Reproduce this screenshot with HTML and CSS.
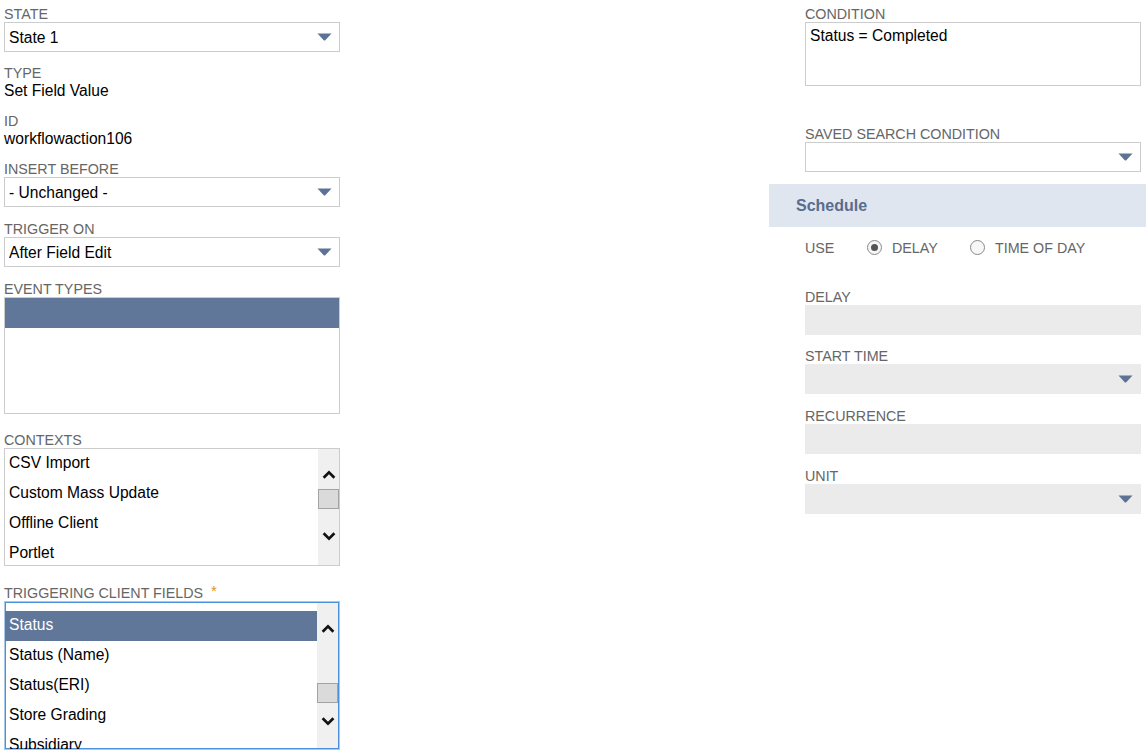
FILE: index.html
```
<!DOCTYPE html>
<html>
<head>
<meta charset="utf-8">
<link rel="stylesheet" href="styles.css">
</head>
<body>
<div class="page">
  <div class="col-left">
    <div class="field">
      <div class="label">STATE</div>
      <div class="select"><span>State 1</span><svg class="caret" viewBox="0 0 15 8"><path d="M0.5 0.5 H14.5 L8.3 7.2 Q7.5 8 6.7 7.2 Z"/></svg></div>
    </div>
    <div class="field">
      <div class="label">TYPE</div>
      <div class="value">Set Field Value</div>
    </div>
    <div class="field">
      <div class="label">ID</div>
      <div class="value">workflowaction106</div>
    </div>
    <div class="field">
      <div class="label">INSERT BEFORE</div>
      <div class="select"><span>- Unchanged -</span><svg class="caret" viewBox="0 0 15 8"><path d="M0.5 0.5 H14.5 L8.3 7.2 Q7.5 8 6.7 7.2 Z"/></svg></div>
    </div>
    <div class="field f-trigger">
      <div class="label">TRIGGER ON</div>
      <div class="select"><span>After Field Edit</span><svg class="caret" viewBox="0 0 15 8"><path d="M0.5 0.5 H14.5 L8.3 7.2 Q7.5 8 6.7 7.2 Z"/></svg></div>
    </div>
    <div class="field f-events">
      <div class="label">EVENT TYPES</div>
      <div class="listbox events">
        <div class="rows">
          <div class="row selected"></div>
        </div>
      </div>
    </div>
    <div class="field f-contexts">
      <div class="label">CONTEXTS</div>
      <div class="listbox contexts">
        <div class="rows">
          <div class="row">CSV Import</div>
          <div class="row">Custom Mass Update</div>
          <div class="row">Offline Client</div>
          <div class="row">Portlet</div>
        </div>
        <div class="scrollbar sb-contexts">
          <svg class="chev up" viewBox="0 0 13 8"><path d="M1.5 7 L6.5 2 L11.5 7"/></svg>
          <div class="thumb"></div>
          <svg class="chev down" viewBox="0 0 13 8"><path d="M1.5 1 L6.5 6 L11.5 1"/></svg>
        </div>
      </div>
    </div>
    <div class="field f-clients">
      <div class="label">TRIGGERING CLIENT FIELDS <span class="req">*</span></div>
      <div class="listbox clients">
        <div class="rows">
          <div class="row selected">Status</div>
          <div class="row">Status (Name)</div>
          <div class="row">Status(ERI)</div>
          <div class="row">Store Grading</div>
          <div class="row">Subsidiary</div>
        </div>
        <div class="scrollbar sb-clients">
          <svg class="chev up" viewBox="0 0 13 8"><path d="M1.5 7 L6.5 2 L11.5 7"/></svg>
          <div class="thumb"></div>
          <svg class="chev down" viewBox="0 0 13 8"><path d="M1.5 1 L6.5 6 L11.5 1"/></svg>
        </div>
      </div>
    </div>
  </div>

  <div class="col-right">
    <div class="rfield">
      <div class="label">CONDITION</div>
      <div class="textarea">Status = Completed</div>
    </div>
    <div class="rfield f-saved">
      <div class="label">SAVED SEARCH CONDITION</div>
      <div class="select"><span></span><svg class="caret" viewBox="0 0 15 8"><path d="M0.5 0.5 H14.5 L8.3 7.2 Q7.5 8 6.7 7.2 Z"/></svg></div>
    </div>
    <div class="section-head">Schedule</div>
    <div class="use-row">
      <span class="label use-label">USE</span>
      <span class="opt opt1"><span class="radio checked"></span><span class="label">DELAY</span></span>
      <span class="opt"><span class="radio"></span><span class="label">TIME OF DAY</span></span>
    </div>
    <div class="rfield sfield f-delay">
      <div class="label">DELAY</div>
      <div class="input"></div>
    </div>
    <div class="rfield sfield">
      <div class="label">START TIME</div>
      <div class="input select-dis"><svg class="caret" viewBox="0 0 15 8"><path d="M0.5 0.5 H14.5 L8.3 7.2 Q7.5 8 6.7 7.2 Z"/></svg></div>
    </div>
    <div class="rfield sfield s14">
      <div class="label">RECURRENCE</div>
      <div class="input"></div>
    </div>
    <div class="rfield sfield s14">
      <div class="label">UNIT</div>
      <div class="input select-dis"><svg class="caret" viewBox="0 0 15 8"><path d="M0.5 0.5 H14.5 L8.3 7.2 Q7.5 8 6.7 7.2 Z"/></svg></div>
    </div>
  </div>
</div>
</body>
</html>
```

FILE: styles.css
```
html, body {
  margin: 0;
  padding: 0;
  background: #fff;
}
body {
  font-family: "Liberation Sans", Arial, sans-serif;
  color: #000;
  width: 1146px;
  height: 754px;
  overflow: hidden;
}
.page {
  display: grid;
  grid-template-columns: 336px 377px;
  column-gap: 429px;
  padding-left: 4px;
  padding-top: 6px;
}
.label {
  font-size: 14.3px;
  line-height: 16px;
  color: #666;
  white-space: nowrap;
}
.value {
  font-size: 15.6px;
  line-height: 19px;
}
.field + .field {
  margin-top: 13px;
}
.field.f-trigger { margin-top: 14px; }
.field.f-events { margin-top: 14px; }
.field.f-contexts { margin-top: 18px; }
.field.f-clients { margin-top: 19px; }

.select {
  height: 30px;
  box-sizing: border-box;
  border: 1px solid #ccc;
  display: flex;
  align-items: center;
  justify-content: space-between;
  padding: 0 7px 0 4px;
  font-size: 15.6px;
  line-height: 19px;
}
.caret {
  width: 15px;
  height: 8px;
  fill: #5d7395;
  flex: none;
}

.listbox {
  box-sizing: border-box;
  border: 1px solid #ccc;
  display: flex;
  overflow: hidden;
}
.rows {
  flex: 1;
  min-width: 0;
}
.row {
  height: 30px;
  line-height: 28px;
  font-size: 15.6px;
  padding-left: 4px;
  white-space: nowrap;
}
.row.selected {
  background: #617799;
  color: #fff;
}
.events { height: 117px; }
.contexts { height: 118px; }
.clients {
  height: 149px;
  border: 1px solid #a6c9ee;
  box-shadow: inset 0 0 0 1px #4a90da;
  padding: 1px 0 1px 0;
}
.clients .rows {
  padding-top: 8px;
}

.scrollbar {
  width: 21px;
  flex: none;
  background: #f0f0f0;
  display: flex;
  flex-direction: column;
  align-items: center;
}
.clients .scrollbar {
  margin-right: 1px;
}
.chev {
  width: 14px;
  height: 9px;
  fill: none;
  stroke: #111;
  stroke-width: 2.5;
  flex: none;
}
.thumb {
  width: 21px;
  height: 20px;
  box-sizing: border-box;
  background: #dadada;
  border: 1px solid #a3a3a3;
  flex: none;
}
.sb-contexts .up { margin-top: 21px; }
.sb-contexts .thumb { margin-top: 10px; }
.sb-contexts .down { margin-top: 23px; }
.sb-clients .up { margin-top: 21px; }
.sb-clients .thumb { margin-top: 50px; }
.sb-clients .down { margin-top: 14px; }

.req {
  color: #e0922a;
  font-size: 15px;
  margin-left: 4px;
  position: relative;
  top: -2px;
}

/* right column */
.rfield {
  margin-left: 36px;
  margin-right: 5px;
}
.textarea {
  height: 64px;
  box-sizing: border-box;
  border: 1px solid #ccc;
  padding: 4px 4px;
  font-size: 15.6px;
  line-height: 18px;
}
.f-saved { margin-top: 40px; }
.section-head {
  margin-top: 12px;
  height: 43px;
  background: #dfe6ef;
  display: flex;
  align-items: center;
  padding-left: 27px;
  font-size: 16px;
  font-weight: bold;
  color: #5a6c8e;
}
.use-row {
  margin-top: 11px;
  margin-left: 36px;
  height: 20px;
  display: flex;
  align-items: center;
}
.use-label {
  width: 62px;
}
.opt {
  display: flex;
  align-items: center;
  gap: 10px;
}
.opt1 {
  width: 103px;
}
.radio {
  width: 15px;
  height: 15px;
  box-sizing: border-box;
  border: 1px solid #8a8a8a;
  border-radius: 50%;
  background: #f7f7f7;
  display: flex;
  align-items: center;
  justify-content: center;
  flex: none;
  position: relative;
  top: -1px;
}
.radio.checked::after {
  content: "";
  width: 7px;
  height: 7px;
  border-radius: 50%;
  background: #555;
}
.f-delay { margin-top: 31px; }
.sfield + .sfield { margin-top: 13px; }
.sfield.s14 { margin-top: 14px; }
.input {
  height: 30px;
  background: #ebebeb;
}
.select-dis {
  display: flex;
  align-items: center;
  justify-content: flex-end;
  padding-right: 8px;
}
```
